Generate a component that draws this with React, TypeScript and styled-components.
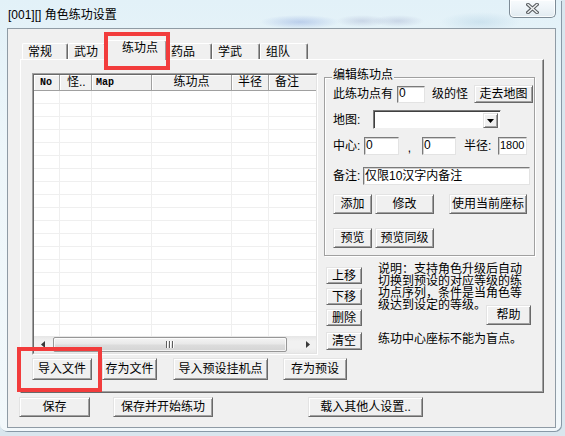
import React from "react";
import styled, { createGlobalStyle, css } from "styled-components";

const FONT = `"Liberation Sans", "Noto Sans CJK SC", sans-serif`;

const GlobalStyle = createGlobalStyle`
  html, body { margin: 0; padding: 0; }
  body {
    width: 565px;
    height: 436px;
    overflow: hidden;
    background: #d9e6ee;
    font-family: ${FONT};
    font-size: 12px;
    color: #000;
  }
  * { box-sizing: border-box; }
`;

const Frame = styled.div`
  width: 561px;
  height: 431px;
  display: flex;
  flex-direction: column;
  border-radius: 0 0 7px 7px;
  box-shadow: 1px 1px 0 rgba(70, 90, 110, 0.55);
  background:
    radial-gradient(ellipse 40px 7px at 300px 22px, rgba(110, 140, 210, 0.35), transparent),
    radial-gradient(ellipse 26px 6px at 362px 21px, rgba(140, 150, 190, 0.3), transparent),
    radial-gradient(ellipse 26px 6px at 398px 21px, rgba(140, 150, 190, 0.3), transparent),
    radial-gradient(ellipse 40px 10px at 480px 22px, rgba(150, 190, 215, 0.3), transparent),
    linear-gradient(180deg, #e2f1f8 0%, #edf6fa 35%, #f2f8fb 100%);
`;

const TitleBar = styled.div`
  height: 28px;
  flex: none;
  display: flex;
  align-items: flex-start;
`;

const TitleText = styled.div`
  padding: 9px 0 0 8px;
  font-size: 12px;
  line-height: 13px;
  white-space: nowrap;
`;

const CloseBtn = styled.div`
  margin-left: auto;
  margin-right: 5px;
  width: 47px;
  height: 18px;
  border: 1px solid #7d8b96;
  border-top: none;
  border-radius: 0 0 5px 5px;
  background: linear-gradient(180deg, #f8fbfd 0%, #eef4f8 50%, #e1eaf0 100%);
  box-shadow: inset 0 0 0 1px rgba(255, 255, 255, 0.8);
  display: flex;
  align-items: center;
  justify-content: center;
`;

const Client = styled.div`
  margin-left: 7px;
  width: 549px;
  height: 400px;
  flex: none;
  border: 1px solid #8f9ba5;
  background: #f0f0f0;
  display: flex;
  flex-direction: column;
`;

const TabArea = styled.div`
  margin-left: 12px;
  display: flex;
  flex-direction: column;
`;

const TabStrip = styled.div`
  margin-top: 11px;
  height: 19px;
  padding-left: 2px;
  display: flex;
  align-items: flex-end;
`;

const Tab = styled.div<{ $w: number; $active?: boolean }>`
  flex: none;
  width: ${(p) => p.$w}px;
  height: 16px;
  padding: 1px 0 0 5px;
  background: #f0f0f0;
  border-top: 1px solid #fff;
  border-left: 1px solid #fff;
  border-right: 1px solid #696969;
  border-radius: 2px 2px 0 0;
  box-shadow: inset -1px 0 0 #a0a0a0;
  line-height: 14px;
  white-space: nowrap;
  ${(p) =>
    p.$active &&
    css`
      width: ${p.$w + 4}px;
      height: 20px;
      margin: 0 -2px -1px;
      padding: 0 0 0 17px;
      position: relative;
      z-index: 2;
    `}
`;

const Highlight = styled.span<{ $t: number; $r: number; $b: number; $l: number }>`
  position: absolute;
  top: ${(p) => -p.$t}px;
  right: ${(p) => -p.$r}px;
  bottom: ${(p) => -p.$b}px;
  left: ${(p) => -p.$l}px;
  border: 4px solid #f23c3c;
  pointer-events: none;
  z-index: 5;
`;

const Panel = styled.div`
  width: 524px;
  height: 334px;
  flex: none;
  border: 1px solid;
  border-color: #fff #696969 #696969 #fff;
  box-shadow: inset -1px -1px 0 #a0a0a0;
  padding: 13px 0 0 11px;
  display: flex;
  flex-direction: column;
`;

const TopRow = styled.div`
  display: flex;
  height: 282px;
  flex: none;
`;

const ListFrame = styled.div`
  width: 286px;
  height: 282px;
  flex: none;
  border: 1px solid;
  border-color: #a0a0a0 #fff #fff #a0a0a0;
`;

const ListInner = styled.div`
  height: 100%;
  border: 1px solid;
  border-color: #696969 #e3e3e3 #e3e3e3 #696969;
  background: #fff;
  display: flex;
  flex-direction: column;
  overflow: hidden;
`;

const HeaderRow = styled.div`
  display: flex;
  height: 16px;
  flex: none;
  background: #f0f0f0;
`;

const HeaderCell = styled.div<{ $w: number; $pad: number; $center?: boolean; $mono?: boolean }>`
  flex: none;
  width: ${(p) => p.$w}px;
  height: 16px;
  padding-left: ${(p) => p.$pad}px;
  text-align: ${(p) => (p.$center ? "center" : "left")};
  border-right: 1px solid #a0a0a0;
  border-bottom: 1px solid #a0a0a0;
  box-shadow: inset 1px 1px 0 #fff;
  white-space: nowrap;
  overflow: hidden;
  line-height: 15px;
  ${(p) =>
    p.$mono
      ? css`
          font-family: "Liberation Mono", monospace;
          font-weight: bold;
          font-size: 10px;
        `
      : css`
          font-size: 12px;
        `}
`;

const GridBody = styled.div`
  flex: 1;
  overflow: hidden;
`;

const GridRow = styled.div`
  display: flex;
  height: 13px;
`;

const GridCell = styled.div<{ $w: number }>`
  flex: none;
  width: ${(p) => p.$w}px;
  height: 13px;
  border-right: 1px solid #efefef;
  border-bottom: 1px solid #efefef;
`;

const HScroll = styled.div`
  flex: none;
  height: 17px;
  display: flex;
  background: linear-gradient(180deg, #e6e6e6 0%, #f1f1f1 30%, #f1f1f1 70%, #e9e9e9 100%);
`;

const ScrollArrow = styled.div`
  flex: none;
  width: 17px;
  height: 17px;
  display: flex;
  align-items: center;
  justify-content: center;
`;

const ScrollTrack = styled.div`
  flex: 1;
  padding: 1px 0 1px 2px;
  display: flex;
`;

const Thumb = styled.div`
  width: 234px;
  height: 15px;
  border: 1px solid #979797;
  border-radius: 2px;
  background: linear-gradient(180deg, #f4f4f4 0%, #e9e9e9 45%, #dcdcdc 55%, #d4d4d4 100%);
  box-shadow: inset 0 0 0 1px rgba(255, 255, 255, 0.7);
  display: flex;
  align-items: center;
  justify-content: center;
  gap: 1px;
`;

const Grip = styled.span`
  width: 2px;
  height: 7px;
  background: #5f5f5f;
  border-right: 1px solid #fff;
`;

const RightCol = styled.div`
  margin-left: 6px;
  width: 211px;
  flex: none;
  display: flex;
  flex-direction: column;
`;

const GroupBox = styled.div`
  position: relative;
  margin-top: 4px;
  width: 211px;
  height: 179px;
  flex: none;
  border: 1px solid #a0a0a0;
  box-shadow: inset 1px 1px 0 #fff, 1px 1px 0 #fff;
  padding: 7px 0 0 8px;
  display: flex;
  flex-direction: column;
`;

const GroupLabel = styled.span`
  position: absolute;
  top: -10px;
  left: 7px;
  padding: 0 1px;
  background: #f0f0f0;
  line-height: 14px;
  white-space: nowrap;
`;

const FormRow = styled.div<{ $h: number; $mt?: number }>`
  display: flex;
  align-items: center;
  height: ${(p) => p.$h}px;
  margin-top: ${(p) => p.$mt ?? 0}px;
  flex: none;
`;

const Label = styled.span<{ $w?: number; $ml?: number }>`
  flex: none;
  ${(p) => (p.$w ? `width: ${p.$w}px;` : "")}
  margin-left: ${(p) => p.$ml ?? 0}px;
  line-height: 14px;
  white-space: nowrap;
`;

const Comma = styled.span`
  flex: none;
  width: 23px;
  align-self: flex-end;
  text-align: center;
  line-height: 14px;
  padding-right: 2px;
`;

const Field = styled.input<{ $w: number; $h?: number; $ml?: number; $small?: boolean }>`
  flex: none;
  width: ${(p) => p.$w}px;
  height: ${(p) => p.$h ?? 18}px;
  margin: 0 0 0 ${(p) => p.$ml ?? 0}px;
  padding: 0 1px 3px;
  background: #fff;
  border: 1px solid;
  border-color: #7a7a7a #e3e3e3 #e3e3e3 #7a7a7a;
  box-shadow: inset 1px 1px 0 #cfcfcf;
  font-family: ${FONT};
  font-size: ${(p) => (p.$small ? 11 : 12)}px;
  line-height: 13px;
  color: #000;
  outline: none;
`;

const Combo = styled.div`
  flex: none;
  width: 128px;
  height: 19px;
  background: #fff;
  border: 1px solid;
  border-color: #7a7a7a #f0f0f0 #f0f0f0 #7a7a7a;
  box-shadow: inset 1px 1px 0 #404040;
  display: flex;
  justify-content: flex-end;
  padding: 2px 2px 1px 0;
`;

const DropBtn = styled.div`
  width: 15px;
  height: 15px;
  background: #f0f0f0;
  border: 1px solid;
  border-color: #e3e3e3 #696969 #696969 #e3e3e3;
  box-shadow: inset 1px 1px 0 #fff, inset -1px -1px 0 #a0a0a0;
  display: flex;
  align-items: center;
  justify-content: center;
`;

const Btn = styled.button<{ $w: number; $h?: number; $ml?: number; $mt?: number }>`
  flex: none;
  width: ${(p) => p.$w}px;
  height: ${(p) => p.$h ?? 20}px;
  margin: ${(p) => p.$mt ?? 0}px 0 0 ${(p) => p.$ml ?? 0}px;
  padding: 0;
  background: #f0f0f0;
  border: 1px solid;
  border-color: #e3e3e3 #696969 #696969 #e3e3e3;
  box-shadow: inset 1px 1px 0 #fff, inset -1px -1px 0 #a0a0a0;
  font-family: ${FONT};
  font-size: 12px;
  line-height: 14px;
  color: #000;
  white-space: nowrap;
  display: flex;
  align-items: center;
  justify-content: center;
`;

const Marked = styled.div<{ $ml?: number }>`
  position: relative;
  display: flex;
  flex: none;
  margin-left: ${(p) => p.$ml ?? 0}px;
`;

const BelowGroup = styled.div`
  display: flex;
  flex: 1;
`;

const SideButtons = styled.div`
  margin: 11px 0 0 2px;
  width: 36px;
  flex: none;
  display: flex;
  flex-direction: column;
`;

const InfoCol = styled.div`
  margin: 7px 0 0 16px;
  width: 153px;
  flex: none;
  display: flex;
  flex-direction: column;
`;

const InfoText = styled.div`
  line-height: 12px;
  white-space: nowrap;
`;

const InfoLastRow = styled.div`
  display: flex;
  align-items: flex-start;
`;

const Note = styled.div`
  margin-top: 7px;
  line-height: 14px;
  white-space: nowrap;
`;

const PanelButtons = styled.div`
  display: flex;
  margin-top: 3px;
`;

const BottomRow = styled.div`
  display: flex;
  margin-top: 4px;
  padding-left: 11px;
`;

const columns = [
  { w: 26, label: "No", pad: 6, mono: true },
  { w: 32, label: "怪..", pad: 7 },
  { w: 60, label: "Map", pad: 4, mono: true },
  { w: 80, label: "练功点", pad: 0, center: true },
  { w: 37, label: "半径", pad: 0, center: true },
  { w: 80, label: "备注", pad: 6 },
];

const CloseGlyph = () => (
  <svg width="13" height="11" viewBox="0 0 13 11">
    <path d="M2 1.5 L11 9.5 M11 1.5 L2 9.5" stroke="#5b5f63" strokeWidth="3.6" strokeLinecap="square" fill="none" />
    <path d="M2 1.5 L11 9.5 M11 1.5 L2 9.5" stroke="#f2f4f5" strokeWidth="1.4" strokeLinecap="square" fill="none" />
  </svg>
);

const ArrowLeft = () => (
  <svg width="4" height="7" viewBox="0 0 4 7">
    <path d="M4 0 L0 3.5 L4 7 Z" fill="#3a3a3a" />
  </svg>
);

const ArrowRight = () => (
  <svg width="4" height="7" viewBox="0 0 4 7">
    <path d="M0 0 L4 3.5 L0 7 Z" fill="#3a3a3a" />
  </svg>
);

const ArrowDown = () => (
  <svg width="7" height="4" viewBox="0 0 7 4">
    <path d="M0 0 L7 0 L3.5 4 Z" fill="#000" />
  </svg>
);

export default function App() {
  const rows = Array.from({ length: 19 }, (_, i) => i);
  return (
    <>
      <GlobalStyle />
      <Frame>
        <TitleBar>
          <TitleText>[001][] 角色练功设置</TitleText>
          <CloseBtn>
            <CloseGlyph />
          </CloseBtn>
        </TitleBar>
        <Client>
          <TabArea>
            <TabStrip>
              <Tab $w={46}>常规</Tab>
              <Tab $w={38}>武功</Tab>
              <Tab $w={59} $active>
                练功点
                <Highlight $t={9} $r={4} $b={10} $l={1} />
              </Tab>
              <Tab $w={47}>药品</Tab>
              <Tab $w={48}>学武</Tab>
              <Tab $w={48}>组队</Tab>
            </TabStrip>
            <Panel>
              <TopRow>
                <ListFrame>
                  <ListInner>
                    <HeaderRow>
                      {columns.map((c) => (
                        <HeaderCell key={c.label} $w={c.w} $pad={c.pad} $center={c.center} $mono={c.mono}>
                          {c.label}
                        </HeaderCell>
                      ))}
                    </HeaderRow>
                    <GridBody>
                      {rows.map((r) => (
                        <GridRow key={r}>
                          {columns.map((c) => (
                            <GridCell key={c.label} $w={c.w} />
                          ))}
                        </GridRow>
                      ))}
                    </GridBody>
                    <HScroll>
                      <ScrollArrow>
                        <ArrowLeft />
                      </ScrollArrow>
                      <ScrollTrack>
                        <Thumb>
                          <Grip />
                          <Grip />
                          <Grip />
                        </Thumb>
                      </ScrollTrack>
                      <ScrollArrow>
                        <ArrowRight />
                      </ScrollArrow>
                    </HScroll>
                  </ListInner>
                </ListFrame>
                <RightCol>
                  <GroupBox>
                    <GroupLabel>编辑练功点</GroupLabel>
                    <FormRow $h={18}>
                      <Label>此练功点有</Label>
                      <Field $w={28} $h={17} $ml={4} readOnly value="0" />
                      <Label $ml={7}>级的怪</Label>
                      <Btn $w={59} $h={18} $ml={6}>
                        走去地图
                      </Btn>
                    </FormRow>
                    <FormRow $h={19} $mt={7}>
                      <Label $w={40}>地图:</Label>
                      <Combo>
                        <DropBtn>
                          <ArrowDown />
                        </DropBtn>
                      </Combo>
                    </FormRow>
                    <FormRow $h={18} $mt={8}>
                      <Label $w={31}>中心:</Label>
                      <Field $w={35} readOnly value="0" />
                      <Comma>,</Comma>
                      <Field $w={34} readOnly value="0" />
                      <Label $w={34} $ml={8}>
                        半径:
                      </Label>
                      <Field $w={29} $small readOnly value="1800" />
                    </FormRow>
                    <FormRow $h={18} $mt={12}>
                      <Label $w={30}>备注:</Label>
                      <Field $w={167} readOnly value="仅限10汉字内备注" />
                    </FormRow>
                    <FormRow $h={20} $mt={9}>
                      <Btn $w={39}>添加</Btn>
                      <Btn $w={59} $ml={3}>
                        修改
                      </Btn>
                      <Btn $w={78} $ml={15}>
                        使用当前座标
                      </Btn>
                    </FormRow>
                    <FormRow $h={20} $mt={14}>
                      <Btn $w={39}>预览</Btn>
                      <Btn $w={59} $ml={3}>
                        预览同级
                      </Btn>
                    </FormRow>
                  </GroupBox>
                  <BelowGroup>
                    <SideButtons>
                      <Btn $w={36} $h={17}>
                        上移
                      </Btn>
                      <Btn $w={36} $h={17} $mt={4}>
                        下移
                      </Btn>
                      <Btn $w={36} $h={17} $mt={4}>
                        删除
                      </Btn>
                      <Btn $w={36} $h={18} $mt={6}>
                        清空
                      </Btn>
                    </SideButtons>
                    <InfoCol>
                      <InfoText>
                        说明：支持角色升级后自动
                        <br />
                        切换到预设的对应等级的练
                        <br />
                        功点序列，条件是当角色等
                      </InfoText>
                      <InfoLastRow>
                        <InfoText>级达到设定的等级。</InfoText>
                        <Btn $w={45} $mt={6} style={{ marginLeft: "auto" }}>
                          帮助
                        </Btn>
                      </InfoLastRow>
                      <Note>练功中心座标不能为盲点。</Note>
                    </InfoCol>
                  </BelowGroup>
                </RightCol>
              </TopRow>
              <PanelButtons>
                <Marked>
                  <Btn $w={60} $h={22}>
                    导入文件
                  </Btn>
                  <Highlight $t={11} $r={10} $b={12} $l={15} />
                </Marked>
                <Btn $w={55} $h={22} $ml={10}>
                  存为文件
                </Btn>
                <Btn $w={95} $h={22} $ml={16}>
                  导入预设挂机点
                </Btn>
                <Btn $w={64} $h={22} $ml={15}>
                  存为预设
                </Btn>
              </PanelButtons>
            </Panel>
          </TabArea>
          <BottomRow>
            <Btn $w={71}>保存</Btn>
            <Btn $w={100} $ml={23}>
              保存并开始练功
            </Btn>
            <Btn $w={115} $ml={95}>
              载入其他人设置..
            </Btn>
          </BottomRow>
        </Client>
      </Frame>
    </>
  );
}
